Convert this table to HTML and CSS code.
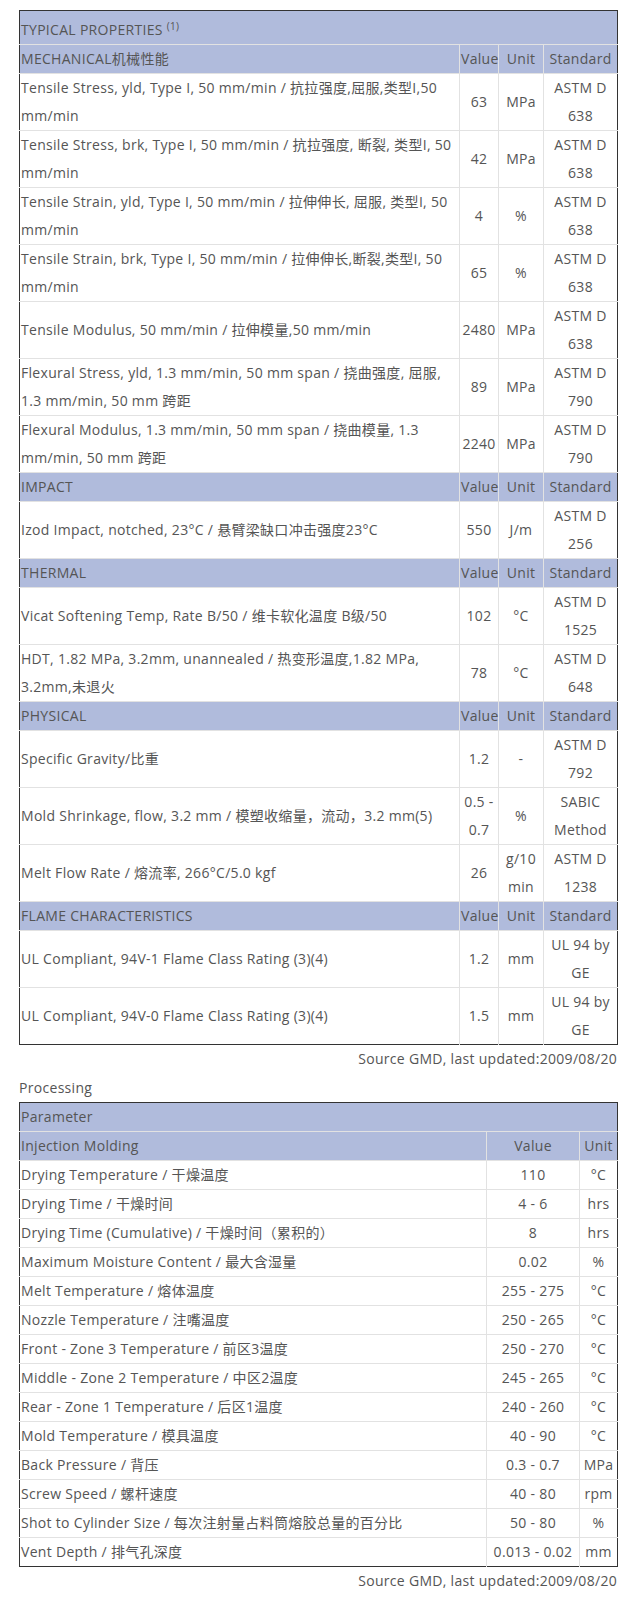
FILE: index.html
```html
<!DOCTYPE html>
<html lang="zh">
<head>
<meta charset="utf-8">
<title>Typical Properties</title>
<link rel="stylesheet" href="styles.css">
</head>
<body>
<div class="page">
  <table class="props">
    <colgroup>
      <col class="c-name"><col class="c-val"><col class="c-unit"><col class="c-std">
    </colgroup>
    <tr class="head title"><td colspan="4">TYPICAL PROPERTIES <sup>(1)</sup></td></tr>
    <tr class="head"><td>MECHANICAL机械性能</td><td class="ctr">Value</td><td class="ctr">Unit</td><td class="ctr">Standard</td></tr>
    <tr><td>Tensile Stress, yld, Type I, 50 mm/min / 抗拉强度,屈服,类型I,50 mm/min</td><td class="ctr">63</td><td class="ctr">MPa</td><td class="ctr">ASTM D 638</td></tr>
    <tr><td>Tensile Stress, brk, Type I, 50 mm/min / 抗拉强度, 断裂, 类型I, 50 mm/min</td><td class="ctr">42</td><td class="ctr">MPa</td><td class="ctr">ASTM D 638</td></tr>
    <tr><td>Tensile Strain, yld, Type I, 50 mm/min / 拉伸伸长, 屈服, 类型I, 50 mm/min</td><td class="ctr">4</td><td class="ctr">%</td><td class="ctr">ASTM D 638</td></tr>
    <tr><td>Tensile Strain, brk, Type I, 50 mm/min / 拉伸伸长,断裂,类型I, 50 mm/min</td><td class="ctr">65</td><td class="ctr">%</td><td class="ctr">ASTM D 638</td></tr>
    <tr><td>Tensile Modulus, 50 mm/min / 拉伸模量,50 mm/min</td><td class="ctr">2480</td><td class="ctr">MPa</td><td class="ctr">ASTM D 638</td></tr>
    <tr><td>Flexural Stress, yld, 1.3 mm/min, 50 mm span / 挠曲强度, 屈服, 1.3 mm/min, 50 mm 跨距</td><td class="ctr">89</td><td class="ctr">MPa</td><td class="ctr">ASTM D 790</td></tr>
    <tr><td>Flexural Modulus, 1.3 mm/min, 50 mm span / 挠曲模量, 1.3 mm/min, 50 mm 跨距</td><td class="ctr">2240</td><td class="ctr">MPa</td><td class="ctr">ASTM D 790</td></tr>
    <tr class="head"><td>IMPACT</td><td class="ctr">Value</td><td class="ctr">Unit</td><td class="ctr">Standard</td></tr>
    <tr><td>Izod Impact, notched, 23°C / 悬臂梁缺口冲击强度23°C</td><td class="ctr">550</td><td class="ctr">J/m</td><td class="ctr">ASTM D 256</td></tr>
    <tr class="head"><td>THERMAL</td><td class="ctr">Value</td><td class="ctr">Unit</td><td class="ctr">Standard</td></tr>
    <tr><td>Vicat Softening Temp, Rate B/50 / 维卡软化温度 B级/50</td><td class="ctr">102</td><td class="ctr">°C</td><td class="ctr">ASTM D 1525</td></tr>
    <tr><td>HDT, 1.82 MPa, 3.2mm, unannealed / 热变形温度,1.82 MPa, 3.2mm,未退火</td><td class="ctr">78</td><td class="ctr">°C</td><td class="ctr">ASTM D 648</td></tr>
    <tr class="head"><td>PHYSICAL</td><td class="ctr">Value</td><td class="ctr">Unit</td><td class="ctr">Standard</td></tr>
    <tr><td>Specific Gravity/比重</td><td class="ctr">1.2</td><td class="ctr">-</td><td class="ctr">ASTM D 792</td></tr>
    <tr><td>Mold Shrinkage, flow, 3.2 mm / 模塑收缩量，流动，3.2 mm(5)</td><td class="ctr">0.5 - 0.7</td><td class="ctr">%</td><td class="ctr">SABIC Method</td></tr>
    <tr><td>Melt Flow Rate / 熔流率, 266°C/5.0 kgf</td><td class="ctr">26</td><td class="ctr">g/10 min</td><td class="ctr">ASTM D 1238</td></tr>
    <tr class="head"><td>FLAME CHARACTERISTICS</td><td class="ctr">Value</td><td class="ctr">Unit</td><td class="ctr">Standard</td></tr>
    <tr><td>UL Compliant, 94V-1 Flame Class Rating (3)(4)</td><td class="ctr">1.2</td><td class="ctr">mm</td><td class="ctr">UL 94 by GE</td></tr>
    <tr><td>UL Compliant, 94V-0 Flame Class Rating (3)(4)</td><td class="ctr">1.5</td><td class="ctr">mm</td><td class="ctr">UL 94 by GE</td></tr>
  </table>
  <div class="source">Source GMD, last updated:2009/08/20</div>

  <div class="section-label">Processing</div>
  <table class="proc">
    <colgroup>
      <col class="p-name"><col class="p-val"><col class="p-unit">
    </colgroup>
    <tr class="head"><td colspan="3">Parameter</td></tr>
    <tr class="head"><td>Injection Molding</td><td class="ctr">Value</td><td class="ctr">Unit</td></tr>
    <tr><td>Drying Temperature / 干燥温度</td><td class="ctr">110</td><td class="ctr">°C</td></tr>
    <tr><td>Drying Time / 干燥时间</td><td class="ctr">4 - 6</td><td class="ctr">hrs</td></tr>
    <tr><td>Drying Time (Cumulative) / 干燥时间（累积的）</td><td class="ctr">8</td><td class="ctr">hrs</td></tr>
    <tr><td>Maximum Moisture Content / 最大含湿量</td><td class="ctr">0.02</td><td class="ctr">%</td></tr>
    <tr><td>Melt Temperature / 熔体温度</td><td class="ctr">255 - 275</td><td class="ctr">°C</td></tr>
    <tr><td>Nozzle Temperature / 注嘴温度</td><td class="ctr">250 - 265</td><td class="ctr">°C</td></tr>
    <tr><td>Front - Zone 3 Temperature / 前区3温度</td><td class="ctr">250 - 270</td><td class="ctr">°C</td></tr>
    <tr><td>Middle - Zone 2 Temperature / 中区2温度</td><td class="ctr">245 - 265</td><td class="ctr">°C</td></tr>
    <tr><td>Rear - Zone 1 Temperature / 后区1温度</td><td class="ctr">240 - 260</td><td class="ctr">°C</td></tr>
    <tr><td>Mold Temperature / 模具温度</td><td class="ctr">40 - 90</td><td class="ctr">°C</td></tr>
    <tr><td>Back Pressure / 背压</td><td class="ctr">0.3 - 0.7</td><td class="ctr">MPa</td></tr>
    <tr><td>Screw Speed / 螺杆速度</td><td class="ctr">40 - 80</td><td class="ctr">rpm</td></tr>
    <tr><td>Shot to Cylinder Size / 每次注射量占料筒熔胶总量的百分比</td><td class="ctr">50 - 80</td><td class="ctr">%</td></tr>
    <tr><td>Vent Depth / 排气孔深度</td><td class="ctr">0.013 - 0.02</td><td class="ctr">mm</td></tr>
  </table>
  <div class="source">Source GMD, last updated:2009/08/20</div>
</div>
</body>
</html>
```
FILE: styles.css
```css
html, body {
  margin: 0;
  padding: 0;
  background: #fff;
}
body {
  font-family: "Open Sans", "Noto Sans CJK SC", sans-serif;
  font-size: 14px;
  line-height: 28px;
  letter-spacing: 0.3px;
  color: #555;
}
.page {
  width: 598px;
  padding: 10px 0 0 19px;
}
table {
  width: 598px;
  border-collapse: collapse;
  table-layout: fixed;
  border: 1px solid #333;
}
td {
  padding: 0 1px;
  border: 1px solid #e2e2e2;
  vertical-align: middle;
  text-align: left;
  line-height: 28px;
}
tr:first-child td { border-top: none; }
tr:last-child td { border-bottom: none; }
td:first-child { border-left: none; }
td:last-child { border-right: none; }
.ctr { text-align: center; }
.head td { background: #b0bbdc; }
.title td { padding-top: 5px; }
sup {
  font-size: 10px;
  line-height: 0;
  vertical-align: 5px;
}
.c-name { width: 440px; }
.c-val { width: 39px; }
.c-unit { width: 45px; }
.c-std { width: 74px; }
.p-name { width: 467px; }
.p-val { width: 93px; }
.p-unit { width: 38px; }
.source {
  text-align: right;
}
.section-label {
  margin-top: 1px;
}
```
